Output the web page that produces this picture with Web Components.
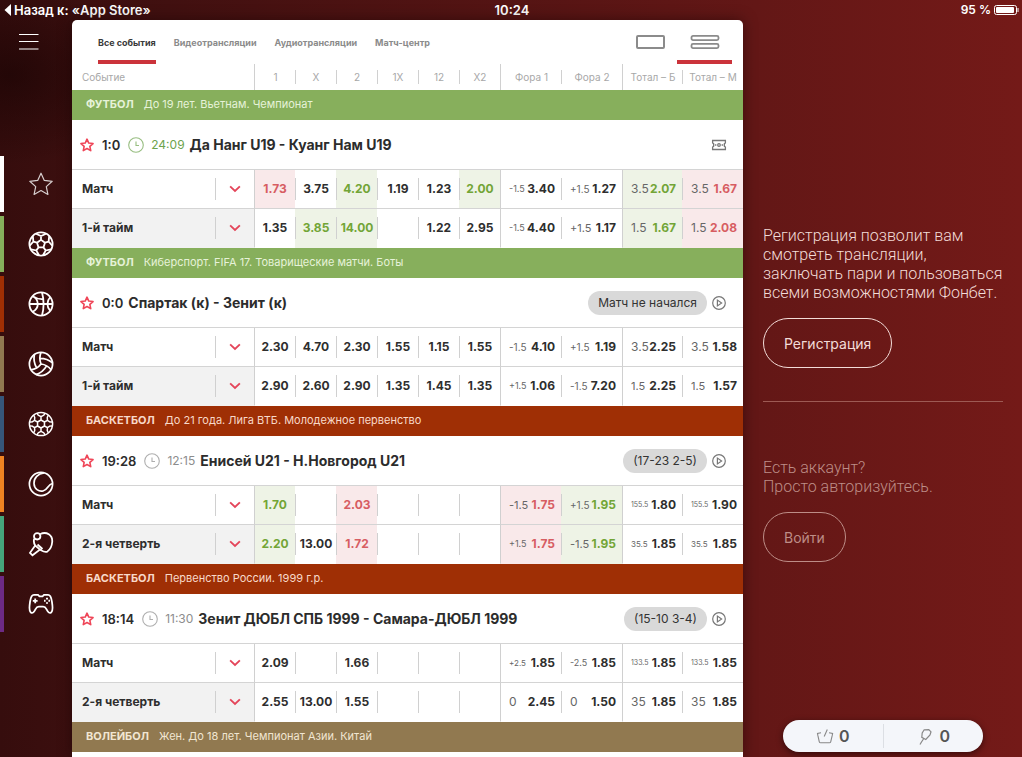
<!DOCTYPE html>
<html lang="ru">
<head>
<meta charset="utf-8">
<meta name="viewport" content="width=device-width, initial-scale=1">
<title>Фонбет</title>
<style>
  html { height: 100%; }
  body {
    margin: 0; min-height: 100%;
    font-family: Inter, "Liberation Sans", sans-serif;
    background: radial-gradient(ellipse 130px 90px at 10px 75px, rgba(20, 2, 2, .55), rgba(20, 2, 2, 0)),
      linear-gradient(90deg, #360d0d 0, #3c0f0f 8%, #631716 74%, #741a18 100%);
  }
</style>
</head>
<body>
<app-shell>
  <status-bar slot="status" time="10:24" battery="95 %">Назад к: «App Store»</status-bar>
  <side-nav slot="nav">
    <sport-link icon="favorite" label="Избранное" color="#ffffff"></sport-link>
    <sport-link icon="football" label="Футбол" color="#86af5b"></sport-link>
    <sport-link icon="basketball" label="Баскетбол" color="#a02f04"></sport-link>
    <sport-link icon="volleyball" label="Волейбол" color="#917950"></sport-link>
    <sport-link icon="handball" label="Гандбол" color="#36567a"></sport-link>
    <sport-link icon="tennis" label="Теннис" color="#ef8322"></sport-link>
    <sport-link icon="pingpong" label="Настольный теннис" color="#45a57b"></sport-link>
    <sport-link icon="gamepad" label="Киберспорт" color="#6d2a84"></sport-link>
  </side-nav>
  <events-board slot="main"></events-board>
  <account-panel slot="side">
    <promo-block>
      Регистрация позволит вам<br>смотреть трансляции,<br>заключать пари и пользоваться<br>всеми возможностями Фонбет.
      <outline-button slot="action">Регистрация</outline-button>
    </promo-block>
    <promo-block muted>
      Есть аккаунт?<br>Просто авторизуйтесь.
      <outline-button slot="action">Войти</outline-button>
    </promo-block>
    <bet-counter slot="footer"></bet-counter>
  </account-panel>
</app-shell>

<script>
const rad = a => a * Math.PI / 180;
const pt = (c, r, a) => `${(c + r * Math.sin(rad(a))).toFixed(2)} ${(c - r * Math.cos(rad(a))).toFixed(2)}`;

function footballPath() {
  let d = '';
  for (let i = 0; i < 5; i++) {
    const a = i * 72;
    d += `M${pt(13, 4.2, a)}L${pt(13, 4.2, a + 72)}`;
    d += `M${pt(13, 4.2, a)}L${pt(13, 8, a)}`;
    d += `M${pt(13, 11.4, a - 26)}L${pt(13, 8, a)}L${pt(13, 11.4, a + 26)}`;
  }
  return d;
}
function handballPath() {
  let d = '';
  for (let i = 0; i < 6; i++) {
    const a = i * 60;
    d += `M${pt(13, 4, a)}L${pt(13, 4, a + 60)}`;
    d += `M${pt(13, 4, a)}L${pt(13, 7.4, a)}`;
    d += `M${pt(13, 9.4, a - 18)}L${pt(13, 7.4, a)}L${pt(13, 9.4, a + 18)}`;
    d += `M${pt(13, 9.4, a + 18)}L${pt(13, 11.6, a + 20)}M${pt(13, 9.4, a - 18)}L${pt(13, 11.6, a - 20)}`;
  }
  return d;
}
const starPath = 'M13 2.200L16.300 9.400L24.200 10.300L18.300 15.600L19.900 23.400L13 19.500L6.100 23.400L7.700 15.600L1.800 10.300L9.700 9.400Z';

const ICONS = {
  favorite: [26, 1.2, `<path d="${starPath}" stroke-linejoin="round" opacity=".8"/>`],
  star: [26, 3, `<path d="${starPath}" stroke-linejoin="round"/>`],
  football: [26, 1.8, `<circle cx="13" cy="13" r="11.600"/><path d="${footballPath()}"/>`],
  basketball: [26, 1.8, `<circle cx="13" cy="13" r="11.600"/><path d="M1.400 13H24.600M14 1.500C15.800 8 15.800 18 14 24.500M4.600 5.200C11.500 8.500 11.500 17.500 4.600 20.800M22.300 6C18.500 10 18.500 16 22.300 20M4.600 5.200C8 7.600 12 8.200 15 8"/>`],
  volleyball: [26, 1.5, `<g transform="translate(-.92 -.92) scale(1.16)"><circle cx="12" cy="12" r="10"/><path d="M11.100 7.100a16.550 16.550 0 0 1 10.900 4M12 12a12.600 12.600 0 0 1-8.700 5M16.800 13.600a16.550 16.550 0 0 1-9 7.500M20.700 17a12.800 12.800 0 0 0-8.700-5 13.300 13.300 0 0 1 0-10M6.300 3.800a16.550 16.550 0 0 0 1.900 11.500"/></g>`],
  handball: [26, 1.5, `<circle cx="13" cy="13" r="11.600"/><path d="${handballPath()}"/>`],
  tennis: [26, 1.7, `<circle cx="13" cy="13" r="11.600"/><path d="M16 2C10 2.500 5.800 7 6 12.500C6.200 17.800 10.800 21 15 20C20.500 18.500 19.500 13.500 24.500 12.500"/>`],
  pingpong: [26, 1.8, `<circle cx="9.200" cy="5.300" r="3.200"/><path d="M12.300 3C18.500 .2 24.800 4 24.200 11C23.900 15 22 18.500 19.500 20.400C17 22 14.500 20 12 18.600L4.500 24.300L2 21.800L7.200 14.500C5.600 12 5.400 10.500 6.200 7.800M7.200 14.500L12 18.600M9.500 13.500L14.500 18"/>`],
  gamepad: [26, 1.8, `<path d="M6 3.800H10L11.500 5.300H14.500L16 3.800H20C22.600 3.800 23.300 6.200 23.900 10.500C24.600 15 25.400 19.500 23.400 21.200C21.300 22.900 19.800 20.800 18.600 18.400C17.600 16.500 16.700 15.700 15.200 15.700H10.800C9.300 15.700 8.400 16.500 7.400 18.400C6.200 20.800 4.700 22.900 2.600 21.200C.6 19.500 1.400 15 2.100 10.500C2.700 6.200 3.400 3.800 6 3.800Z"/><path d="M4.800 9.800H9.600M7.200 7.400V12.200"/><path d="M19 6.800V8.400M19 11.200V12.800M16 9.800H17.600M20.400 9.800H22" stroke-width="2"/>`],
  clock: [16, 1.1, `<circle cx="8" cy="8" r="7.300"/><path d="M8 4.500V8.500H11"/>`],
  play: [16, 1.2, `<circle cx="8" cy="8" r="6.300"/><path d="M6.400 5.100V10.900L10.600 8Z"/>`],
  ticket: [16, 1.3, `<path d="M1.600 3.500H14.400V6L13.400 6.600V9.400L14.400 10V12.500H1.600V10L2.600 9.400V6.600L1.600 6Z"/><circle cx="8" cy="8" r="1.300"/><path d="M4.600 7.200V8.800M11.400 7.200V8.800" stroke-width="1.600"/>`],
  chevron: [16, 2.5, `<path d="M1.500 4.500L8 10.500L14.500 4.500"/>`],
  basket: [18, 1.1, `<path d="M5 5.800L1.500 6.500L1.800 8.200L3.300 14.800Q3.600 15.800 4.600 15.800H13.400Q14.400 15.800 14.700 14.800L16.300 8.200L16.600 6.500L13 5.800M8.200 9.500L11.300 2.500"/>`],
  racket: [18, 1.2, `<path d="M8.200 2.800L12.800 2.600L15 4.800L14 8L9.800 12.500L5.800 10.300L6.200 6Z M7.800 11.500L4.500 16.500M5.500 15L4 17.500"/>`],
  single: [30, 2, `<rect x="2" y="9" width="27" height="12" rx="1"/>`],
  stacked: [30, 1.800, `<rect x="1.500" y="8.900" width="27" height="4.200" rx="1.500"/><rect x="1.500" y="16.900" width="27" height="4.200" rx="1.500"/>`],
  menu: [20, 1, `<path d="M0 2.500H19.500M0 9.500H19.500M0 17H19.500"/>`],
  battery: [28, 1, `<rect x=".5" y="9.500" width="22" height="9" rx="2"/><rect x="2" y="11" width="18" height="6" rx="1" fill="currentColor" stroke="none"/><path d="M24 12V16"/>`],
  back: [12, 0, `<path d="M9 0V12L2.500 6Z" fill="currentColor"/>`]
};

class BaseElement extends HTMLElement {
  connectedCallback() {
    if (this.shadowRoot) return;
    this.attachShadow({ mode: 'open' });
    this.shadowRoot.innerHTML = `<style>*{box-sizing:border-box}button{font:inherit;color:inherit;background:none;border:0;padding:0;margin:0;cursor:pointer}a{color:inherit;text-decoration:none}${this.css()}</style>${this.html()}`;
  }
  css() { return ''; }
  html() { return '<slot></slot>'; }
  attr(name) { return this.getAttribute(name) || ''; }
}
const define = (name, cls) => customElements.define(name, cls);

define('ui-icon', class extends BaseElement {
  css() { return `:host{display:block;flex:none;width:var(--icon-size,26px);height:var(--icon-size,26px)} svg{display:block;width:100%;height:100%}`; }
  html() {
    const [box, width, body] = ICONS[this.attr('name')];
    return `<svg viewBox="0 0 ${box} ${box}" fill="none" stroke="currentColor" stroke-width="${width}" aria-hidden="true">${body}</svg>`;
  }
});

define('app-shell', class extends BaseElement {
  css() { return `
    :host{display:grid;min-height:100vh;grid-template:20px 1fr / 72px minmax(0,1fr) 279px;grid-template-areas:"status status status" "nav main side"}
    slot{display:grid;min-width:0} [name=status]{grid-area:status} [name=nav]{grid-area:nav} [name=main]{grid-area:main} [name=side]{grid-area:side;grid-template-columns:minmax(0,1fr)}`; }
  html() { return `<slot name="status"></slot><slot name="nav"></slot><slot name="main"></slot><slot name="side"></slot>`; }
});

define('status-bar', class extends BaseElement {
  css() { return `
    :host{display:grid;grid-template-columns:1fr auto 1fr;align-items:center;padding-left:2px;color:#fff;font-size:13px;line-height:20px;font-weight:600}
    a,.power{display:flex;align-items:center} .power{justify-content:flex-end;gap:3px;font-size:12px}
    .back{--icon-size:12px} .power ui-icon{--icon-size:28px;height:28px;margin:-4px 0}`; }
  html() { return `<a href="#"><ui-icon class="back" name="back"></ui-icon><slot></slot></a><time>${this.attr('time')}</time><span class="power">${this.attr('battery')}<ui-icon name="battery"></ui-icon></span>`; }
});

define('side-nav', class extends BaseElement {
  css() { return `
    :host{display:block;color:#fff} .menu{display:block;margin:12px 0 0 19px;--icon-size:20px}
    nav{display:flex;flex-direction:column;gap:4px;margin-top:104px}`; }
  html() { return `<button class="menu" aria-label="Меню"><ui-icon name="menu"></ui-icon></button><nav><slot></slot></nav>`; }
});

define('sport-link', class extends BaseElement {
  css() { return `:host{display:block} a{display:flex;align-items:center;height:56px;padding-left:24px;border-left:4px solid ${this.attr('color')}}`; }
  html() { return `<a href="#" aria-label="${this.attr('label')}"><ui-icon name="${this.attr('icon')}"></ui-icon></a>`; }
});

define('board-tabs', class extends BaseElement {
  css() { return `
    :host{display:flex;justify-content:space-between;height:44px;padding:0 11px 0 26px;font-size:9px;font-weight:700;color:#8b8b8b}
    div{display:flex} .tabs{gap:18px}
    button{display:flex;align-items:center;justify-content:center;border-bottom:4px solid transparent;padding-top:4px}
    .views button{width:55px;--icon-size:30px} button[aria-pressed=true],button[aria-selected=true]{border-color:#cb333b} button[aria-selected=true]{color:#3a3a3a}`; }
  html() { return `
    <div class="tabs" role="tablist"><button role="tab" aria-selected="true">Все события</button><button role="tab">Видеотрансляции</button><button role="tab">Аудиотрансляции</button><button role="tab">Матч-центр</button></div>
    <div class="views"><button aria-label="Одна строка"><ui-icon name="single"></ui-icon></button><button aria-pressed="true" aria-label="Две строки"><ui-icon name="stacked"></ui-icon></button></div>`; }
});

define('event-title', class extends BaseElement {
  css() { return `
    :host{display:flex;align-items:center;height:49px;padding:0 16px 0 8px;font-weight:600;color:#2c2c2c}
    .star{color:#ef4658;--icon-size:14px;margin-right:8px} .score{font-size:13px}
    .clock{display:flex;align-items:center;gap:7px;margin-left:8px;font-size:12px;font-weight:400;color:#8d8d8d;--icon-size:16px}
    .clock ui-icon{opacity:.7} .clock.live{color:#6da34d}
    h3{flex:1;margin:0 0 0 5px;font-size:14px;line-height:20px;font-weight:700;white-space:nowrap}
    .note{height:24px;padding:0 10px;border-radius:12px;background:#d9d9d9;font-size:12px;line-height:24px;font-weight:400;color:#333}
    .media{margin-left:4px;color:#777;--icon-size:16px}`; }
  html() {
    const clock = this.attr('clock');
    return `<button class="star" aria-label="В избранное"><ui-icon name="star"></ui-icon></button><span class="score">${this.attr('score')}</span>
    ${clock ? `<span class="clock ${this.hasAttribute('live') ? 'live' : ''}"><ui-icon name="clock"></ui-icon><time>${clock}</time></span>` : ''}
    <h3><slot></slot></h3>${this.attr('note') ? `<span class="note">${this.attr('note')}</span>` : ''}
    <button class="media" aria-label="Трансляция"><ui-icon name="${this.attr('media')}"></ui-icon></button>`;
  }
});

define('odds-value', class extends BaseElement {
  css() {
    const size = this.attr('size');
    return `
    :host{display:flex;align-items:center;justify-content:center;height:22px;border-left:1px solid #d0d0d0;font-size:12px;font-weight:700;white-space:nowrap}
    :host([lead]){border-left:0} :host([param]){justify-content:space-between;padding:0 6px 0 8px}
    small{font-size:${size || 12}px;font-weight:400;color:#666}`;
  }
  html() { return `${this.hasAttribute('param') ? `<small>${this.attr('param')}</small>` : ''}<slot></slot>`; }
});

/* Cell notation: "value" or "parameter|value|parameter size"; a leading "^+" marks a rise, "^-" a fall. */
const GAMES = [
  { sport: 'ФУТБОЛ', league: 'До 19 лет. Вьетнам. Чемпионат', color: '#87af5c', ink: '#e6f2d8',
    title: 'Да Нанг U19 - Куанг Нам U19', score: '1:0', clock: '24:09', live: true, media: 'ticket', rows: [
    ['Матч', '^-1.73', '3.75', '^+4.20', '1.19', '1.23', '^+2.00', '-1.5|3.40|9', '+1.5|1.27|10', '^+3.5|2.07|12', '^-3.5|1.67|12'],
    ['1-й тайм', '1.35', '^+3.85', '^+14.00', '', '1.22', '2.95', '-1.5|4.40|9', '+1.5|1.17|11', '^+1.5|1.67|12', '^-1.5|2.08|12']] },
  { sport: 'ФУТБОЛ', league: 'Киберспорт. FIFA 17. Товарищеские матчи. Боты', color: '#87af5c', ink: '#e6f2d8',
    title: 'Спартак (к) - Зенит (к)', score: '0:0', note: 'Матч не начался', media: 'play', rows: [
    ['Матч', '2.30', '4.70', '2.30', '1.55', '1.15', '1.55', '-1.5|4.10|10', '+1.5|1.19|10', '3.5|2.25|12', '3.5|1.58|12'],
    ['1-й тайм', '2.90', '2.60', '2.90', '1.35', '1.45', '1.35', '+1.5|1.06|9', '-1.5|7.20|10', '1.5|2.25|11', '1.5|1.57|11']] },
  { sport: 'БАСКЕТБОЛ', league: 'До 21 года. Лига ВТБ. Молодежное первенство', color: '#9f2f05', ink: '#f8d9c9',
    title: 'Енисей U21 - Н.Новгород U21', score: '19:28', clock: '12:15', note: '(17-23 2-5)', media: 'play', rows: [
    ['Матч', '^+1.70', '', '^-2.03', '', '', '', '^--1.5|1.75|11', '^++1.5|1.95|10', '155.5|1.80|7', '155.5|1.90|7'],
    ['2-я четверть', '^+2.20', '13.00', '^-1.72', '', '', '', '^-+1.5|1.75|9', '^+-1.5|1.95|11', '35.5|1.85|8', '35.5|1.85|8']] },
  { sport: 'БАСКЕТБОЛ', league: 'Первенство России. 1999 г.р.', color: '#9f2f05', ink: '#f8d9c9',
    title: 'Зенит ДЮБЛ СПБ 1999 - Самара-ДЮБЛ 1999', score: '18:14', clock: '11:30', note: '(15-10 3-4)', media: 'play', rows: [
    ['Матч', '2.09', '', '1.66', '', '', '', '+2.5|1.85|8', '-2.5|1.85|9', '133.5|1.85|7', '133.5|1.85|7'],
    ['2-я четверть', '2.55', '13.00', '1.55', '', '', '', '0|2.45|12', '0|1.50|12', '35|1.85|12', '35|1.85|12']] },
  { sport: 'ВОЛЕЙБОЛ', league: 'Жен. До 18 лет. Чемпионат Азии. Китай', color: '#917950', ink: '#f1e6d2', rows: [] }
];

define('events-board', class extends BaseElement {
  css() { return `
    :host{display:block;background:#fff;border-radius:5px 5px 0 0;overflow:hidden;box-shadow:0 0 14px rgba(20,0,0,.5)}
    table{width:100%;table-layout:fixed;border-collapse:separate;border-spacing:0;color:#2e2e2e}
    col.odd{width:41px} col.wide{width:61px} col.total{width:60px}
    th,td{padding:0;text-align:left;font-weight:700}
    thead th{height:26px;font-size:10px;font-weight:400;color:#a8a8a8;text-align:center;white-space:nowrap}
    thead th:first-child{text-align:left;padding-left:10px}
    thead span{display:block;height:14px;line-height:14px;border-left:1px solid #d0d0d0}
    .group{border-left:1px solid #d0d0d0} .group span{border-color:transparent}
    .league{height:30px;padding:0 0 2px 14px;font-size:11px;font-weight:400}
    .league b{font-weight:700;margin-right:10px}
    .event{border-bottom:1px solid #d4d4d4}
    .row th,.row td{height:39px;padding-bottom:1px;border-bottom:1px solid #d4d4d4}
    .row:last-child th,.row:last-child td{border-bottom-color:transparent}
    .row:last-child th{background:#f2f2f2}
    .label{display:flex;align-items:center;justify-content:space-between;padding-left:10px;font-size:12px}
    .label button{display:flex;align-items:center;justify-content:center;width:39px;height:22px;border-left:1px solid #d0d0d0;color:#e4455a;--icon-size:12px}
    .up{background:#eef3e6;color:#72a536} .down{background:#f9e9ea;color:#d75d62}`; }
  cell(text, i) {
    const trend = text[0] === '^' ? (text[1] === '+' ? 'up' : 'down') : '';
    const parts = (trend ? text.slice(2) : text).split('|');
    const group = [0, 6, 8].includes(i);
    const param = parts.length > 1 ? `param="${parts[0]}" size="${parts[2]}"` : '';
    return `<td class="${trend}${group ? ' group' : ''}"><odds-value ${group ? 'lead' : ''} ${param}>${parts[1] || parts[0]}</odds-value></td>`;
  }
  html() {
    const heads = ['1', 'X', '2', '1X', '12', 'X2', 'Фора 1', 'Фора 2', 'Тотал – Б', 'Тотал – М'];
    return `<board-tabs></board-tabs><table>
      <colgroup><col>${'<col class="odd">'.repeat(6)}<col class="wide"><col class="wide"><col class="total"><col class="wide"></colgroup>
      <thead><tr><th scope="col">Событие</th>${heads.map((h, i) => `<th scope="col" class="${[0, 6, 8].includes(i) ? 'group' : ''}"><span>${h}</span></th>`).join('')}</tr></thead>
      ${GAMES.map(g => `<tbody>
        <tr><th class="league" colspan="11" style="background:${g.color};color:${g.ink}"><b>${g.sport}</b>${g.league}</th></tr>
        ${g.title ? `<tr><th class="event" colspan="11"><event-title score="${g.score}" clock="${g.clock || ''}" note="${g.note || ''}" media="${g.media}" ${g.live ? 'live' : ''}>${g.title}</event-title></th></tr>` : ''}
        ${g.rows.map(([name, ...cells]) => `<tr class="row"><th scope="row"><div class="label">${name}<button aria-label="Развернуть"><ui-icon name="chevron"></ui-icon></button></div></th>${cells.map((c, i) => this.cell(c, i)).join('')}</tr>`).join('')}
      </tbody>`).join('')}</table>`;
  }
});

define('account-panel', class extends BaseElement {
  css() { return `:host{display:flex;flex-direction:column;padding:206px 19px 5px 20px} ::slotted(promo-block:not(:first-child)){margin-top:56px} footer{margin-top:auto;padding:0 20px}`; }
  html() { return `<slot></slot><footer><slot name="footer"></slot></footer>`; }
});

define('promo-block', class extends BaseElement {
  css() { return `
    :host{display:block;color:#f3dcd8;padding-bottom:33px;border-bottom:1px solid #9d5a54}
    :host([muted]){color:#bd8d87;border:0}
    p{margin:0 0 16px;font-family:Roboto,Inter,sans-serif;font-size:16px;line-height:19px;font-weight:300;white-space:nowrap}`; }
  html() { return `<p><slot></slot></p><slot name="action"></slot>`; }
});

define('outline-button', class extends BaseElement {
  css() { return `:host{display:block} button{height:50px;padding:0 20px;border:1px solid currentColor;border-radius:25px;font-size:14px}`; }
  html() { return `<button type="button"><slot></slot></button>`; }
});

define('bet-counter', class extends BaseElement {
  css() { return `
    :host{display:flex;align-items:center;height:32px;border-radius:16px;background:#f4f6fa;box-shadow:0 2px 6px rgba(20,0,0,.6);color:#555;font-size:16px;font-weight:600}
    button{flex:1;display:flex;align-items:center;justify-content:center;gap:5px;height:24px;--icon-size:18px} button+button{border-left:1px solid #dcdfe4}
    ui-icon{color:#888}`; }
  html() { return `<button aria-label="Корзина: 0"><ui-icon name="basket"></ui-icon>0</button><button aria-label="Ставки: 0"><ui-icon name="racket"></ui-icon>0</button>`; }
});
</script>
</body>
</html>
